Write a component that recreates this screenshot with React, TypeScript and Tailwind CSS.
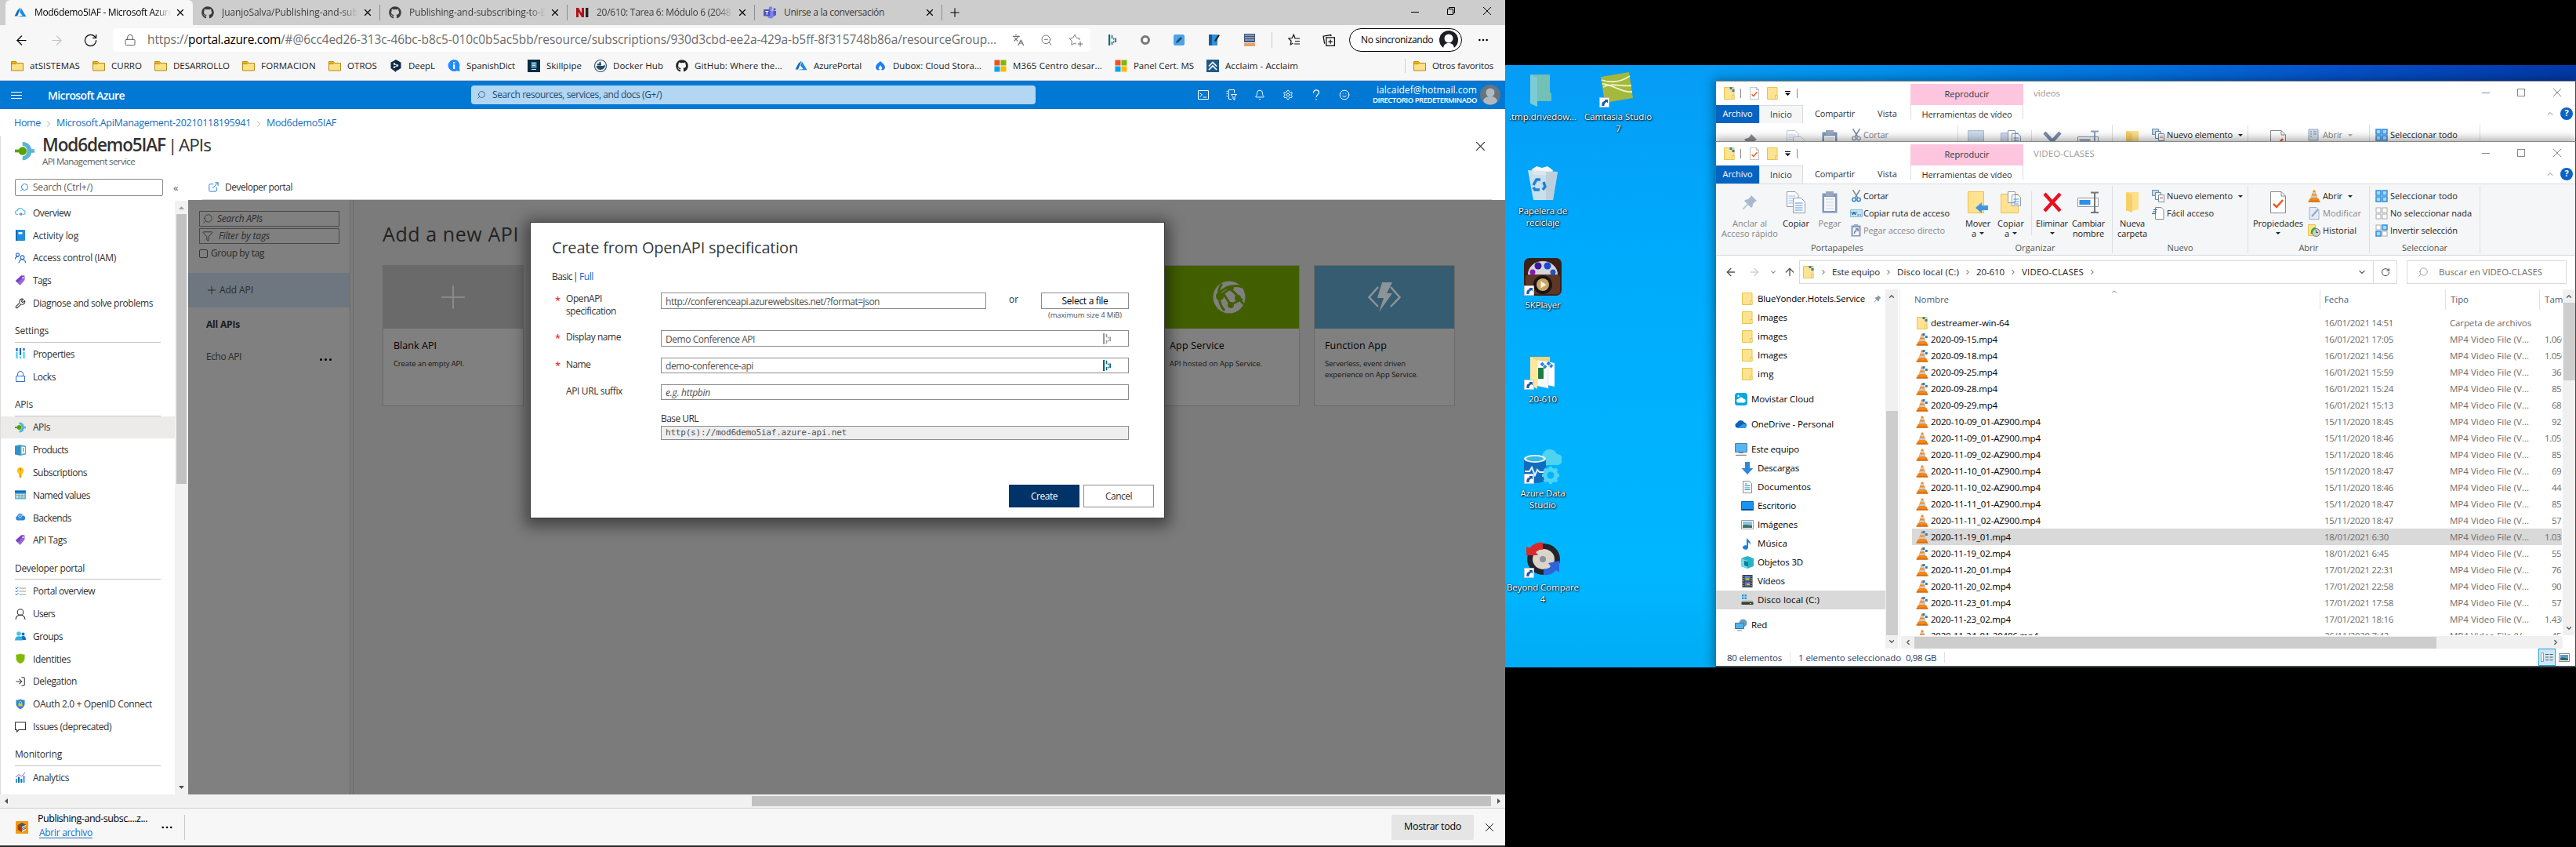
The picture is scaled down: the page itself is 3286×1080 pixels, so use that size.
import React, { useLayoutEffect, useRef } from "react";
import {
  ArrowLeft, ArrowRight, ArrowUp, RotateCw, Lock, Star, ZoomOut, Search, Filter, X, Plus, Bell, Settings, Smile,
  ExternalLink, ChevronRight, ChevronDown, ChevronUp, ChevronLeft, Wrench, LogIn, Languages, MoreHorizontal,
} from "lucide-react";
import { FaGithub } from "react-icons/fa";

type TP = { w: number; children: string; className?: string };

/* Text run whose tracking is adjusted so that it spans exactly w pixels. */
function T({ w, children, className = "" }: TP) {
  const ref = useRef<HTMLSpanElement>(null);
  useLayoutEffect(() => {
    const el = ref.current;
    if (!el) return;
    el.style.letterSpacing = "0px";
    const natural = el.getBoundingClientRect().width;
    el.style.letterSpacing = `${(w - natural) / children.length}px`;
  }, [w, children]);
  return (
    <span ref={ref} className={"inline-block shrink-0 whitespace-pre " + className}>
      {children}
    </span>
  );
}

/* ---------- shared icons ---------- */

const AzureLogo = () => (
  <svg viewBox="0 0 16 16" className="size-4 shrink-0">
    <path d="M8.5 1.5 4.6 4.8 0.5 12.6h3.6z" fill="#0b6bbd" />
    <path d="M9 2.6 7 7.6l3.7 4.5-7.2 1.2H15.5z" fill="#1a8ae6" />
  </svg>
);

const YFolder = () => (
  <svg viewBox="0 0 16 16" className="size-4 shrink-0">
    <path d="M0.5 2.5h6l1.5 2h7.5v9.5h-15z" fill="#ffe082" stroke="#b58a1b" />
    <path d="M0.5 5.5h6l1.3-1.2" fill="none" stroke="#b58a1b" />
    <path d="M1 3h5.3l1 1.3-.9.8H1z" fill="#f4b400" />
  </svg>
);

const MsLogo = () => (
  <svg viewBox="0 0 16 16" className="size-4 shrink-0">
    <path d="M.5.5h7v7h-7z" fill="#f25022" />
    <path d="M8.5.5h7v7h-7z" fill="#7fba00" />
    <path d="M.5 8.500h7v7h-7z" fill="#00a4ef" />
    <path d="M8.5 8.500h7v7h-7z" fill="#ffb900" />
  </svg>
);

const ApiIcon = ({ className = "size-3.5" }: { className?: string }) => (
  <svg viewBox="0 0 16 16" className={className + " shrink-0"}>
    <path d="M6.2 0.5A7.6 7.6 0 0 1 13.6 6.6H16v2.8h-2.4A7.6 7.6 0 0 1 6.2 15.5v-3a4.6 4.6 0 0 0 0-9z" fill="#59b4d9" />
    <circle cx="6.3" cy="8" r="3.3" fill="#57a300" />
    <path d="M0 6.8h4v2.4H0z" fill="#57a300" />
  </svg>
);

const Dash = ({ color }: { color: string }) => (
  <svg viewBox="0 0 12 14" className="h-3.5 w-3 shrink-0" fill={color}>
    <path d="M1 0h2.2v14H1zM4.800 0.800h1.500v4.400H4.800zM4.800 9h1.500v4.200H4.800zM7 4.500h1.400v2H7zM7 8.500h1.400v2H7zM9.300 4.500H11v5.500H9.300z" />
  </svg>
);

/* ---------- browser chrome ---------- */

const tabs = [
  { t: "Mod6demo5IAF - Microsoft Azure", w: 177, icon: <AzureLogo />, active: true, sep: false, fade: true },
  { t: "JuanjoSalva/Publishing-and-subsc", w: 185, icon: <FaGithub className="size-4 shrink-0" />, active: false, sep: true, fade: true },
  { t: "Publishing-and-subscribing-to-Ev", w: 180, icon: <FaGithub className="size-4 shrink-0" />, active: false, sep: true, fade: true },
  {
    t: "20/610: Tarea 6: Módulo 6 (20487", w: 178, active: false, sep: true, fade: true,
    icon: (
      <svg viewBox="0 0 16 16" className="size-4 shrink-0">
        <path d="M0 2h3l4 7V2h3v12H7L3 7v7H0z" fill="#b01218" />
        <path d="M12 2h3.4v12H12z" fill="#222" />
      </svg>
    ),
  },
  {
    t: "Unirse a la conversación", w: 128, active: false, sep: true, fade: false,
    icon: (
      <svg viewBox="0 0 16 16" className="size-4 shrink-0">
        <circle cx="9" cy="2.6" r="2.3" fill="#7b83eb" />
        <circle cx="14" cy="3.8" r="1.6" fill="#5059c9" />
        <path d="M5 5.5h8v6a4 4 0 0 1-8 0z" fill="#7b83eb" />
        <path d="M12.6 6H16v4a2.5 2.5 0 0 1-3.4 2.4z" fill="#5059c9" />
        <rect x="0" y="4" width="8.4" height="8.4" rx="1" fill="#4b53bc" />
        <path d="M2.3 6h4v1.1H4.9v3.6H3.7V7.1H2.3z" fill="#fff" />
      </svg>
    ),
  },
];

function TabBar() {
  return (
    <div className="flex h-8 shrink-0 bg-[#cdcdcd] pl-[7px] text-[12px] text-[#3b3b3b]">
      {tabs.map((tab) => (
        <div
          key={tab.t}
          className={
            "flex h-8 w-[239px] items-center pl-[11px] " + (tab.active ? "rounded-t-md bg-[#f7f7f7] text-black" : "text-[#3b3b3b]")
          }
        >
          {tab.icon}
          <div
            className={
              "ml-2.5 flex h-full w-[174px] items-center overflow-hidden " +
              (tab.fade ? "[mask-image:linear-gradient(to_right,black_88%,transparent)]" : "")
            }
          >
            <T w={tab.w}>{tab.t}</T>
          </div>
          <X className="ml-[5px] size-3.5 text-black" strokeWidth={2} />
          {tab.sep && <div className="ml-auto h-5 w-px bg-[#8c8c8c]" />}
        </div>
      ))}
      <div className="flex w-8 items-center justify-center">
        <Plus className="size-[18px] text-black" strokeWidth={1.4} />
      </div>
      <div className="ml-auto flex h-7 items-center text-black">
        <div className="flex w-[46px] justify-center"><div className="mt-0.5 h-px w-2.5 bg-black" /></div>
        <div className="flex w-[46px] justify-center">
          <svg viewBox="0 0 10 10" className="size-2.5" fill="none" stroke="#000"><path d="M.5 2.5h7v7h-7zM2.500 2.500v-2h7v7h-2" /></svg>
        </div>
        <div className="flex w-[46px] justify-center">
          <svg viewBox="0 0 10 10" className="size-2.5" stroke="#000"><path d="M0 0l10 10M10 0L0 10" /></svg>
        </div>
      </div>
    </div>
  );
}

function AddressBar() {
  return (
    <div className="flex h-[38px] shrink-0 items-center bg-[#f7f7f7] text-black">
      <div className="flex w-[144px] items-center pl-[18px]">
        <ArrowLeft className="size-[19px]" strokeWidth={1.5} />
        <ArrowRight className="ml-[26px] size-[19px] text-[#c4c4c4]" strokeWidth={1.5} />
        <RotateCw className="ml-[24px] size-[19px]" strokeWidth={1.5} />
      </div>
      <div className="flex h-[30px] w-[1247px] items-center rounded bg-white text-[15.500px] text-[#6b6b6b]">
        <Lock className="ml-[14px] size-4 text-[#444]" strokeWidth={1.3} />
        <div className="ml-[14px] flex">
          <T w={52}>https://</T>
          <T w={118} className="text-black">portal.azure.com</T>
          <T w={913}>/#@6cc4ed26-313c-46bc-b8c5-010c0b5ac5bb/resource/subscriptions/930d3cbd-ee2a-429a-b5ff-8f315748b86a/resourceGroup...</T>
        </div>
        <Languages className="ml-[20px] size-4" strokeWidth={1.7} />
        <ZoomOut className="ml-[20px] size-4" strokeWidth={1.4} />
        <div className="relative ml-[20px]">
          <Star className="size-4" strokeWidth={1.4} />
          <Plus className="absolute -right-1 -bottom-0.5 size-2.5 bg-white" strokeWidth={2.5} />
        </div>
      </div>
      <div className="ml-[22px] flex items-center gap-[30px]">
        <Dash color="#0e6a7a" />
        <div className="size-3 rounded-full border-[3px] border-[#777] bg-white" />
        <svg viewBox="0 0 14 14" className="size-3.5"><rect width="14" height="14" rx="2" fill="#4da3e8" /><path d="M3 11l1-3 5-5 2 2-5 5z" fill="#244a6b" /></svg>
        <svg viewBox="0 0 16 16" className="size-4"><path d="M1 1h11v14H1z" fill="#2f8fd8" /><path d="M1 1h4v14H1z" fill="#155a98" /><path d="M8 9l5-8 2 1-5 8z" fill="#222" /></svg>
        <svg viewBox="0 0 14 16" className="h-4 w-3.5"><path d="M0 0h14v11H0z" fill="#3d5578" /><path d="M1 2h12M1 5h12M1 8h12" stroke="#cfdcf0" /><path d="M0 12h14v4H0z" fill="#e9a06a" /></svg>
      </div>
      <div className="ml-[21px] h-5 w-px bg-[#c8c8c8]" />
      <svg viewBox="0 0 16 16" className="ml-5 size-4" fill="none" stroke="#111" strokeWidth="1.2">
        <path d="M9 5.500 7.200 1.200 5.200 5.500.8 6l3.300 3.200-.8 4.700 3.200-1.800M8.500 6H15M9 9.500h6M8 13h7" />
      </svg>
      <svg viewBox="0 0 16 16" className="ml-[28px] size-[17px]" fill="none" stroke="#111" strokeWidth="1.2">
        <path d="M4.500 4.500h10v10h-10zM9.500 7v5M7 9.500h5M2.500 12 1 3l9-1.500.4 1.500" />
      </svg>
      <div className="ml-[17px] flex h-[30px] w-[144px] items-center rounded-full border border-black bg-white pl-[14px] text-[12px]">
        <T w={92}>No sincronizando</T>
        <svg viewBox="0 0 24 24" className="ml-2 size-6">
          <circle cx="12" cy="12" r="12" fill="#1b1f23" />
          <circle cx="12" cy="10" r="5.500" fill="#fff" />
          <path d="M5 24c0-6 3-8 7-8s7 2 7 8z" fill="#fff" />
        </svg>
      </div>
      <MoreHorizontal className="ml-[19px] size-4" strokeWidth={1.8} />
    </div>
  );
}

const marks: { t: string; w: number; icon: React.ReactNode }[] = [
  { t: "atSISTEMAS", w: 64, icon: <YFolder /> },
  { t: "CURRO", w: 39, icon: <YFolder /> },
  { t: "DESARROLLO", w: 72, icon: <YFolder /> },
  { t: "FORMACION", w: 70, icon: <YFolder /> },
  { t: "OTROS", w: 38, icon: <YFolder /> },
  { t: "DeepL", w: 34, icon: <svg viewBox="0 0 16 16" className="size-4 shrink-0"><path d="M8 0l6.500 3.700v7.300L8 14.800V16l-2-1.500L1.500 11V3.700z" fill="#0f2b46" /><circle cx="6" cy="5.500" r="1.200" fill="#fff" /><circle cx="10" cy="7.500" r="1.200" fill="#fff" /><circle cx="6" cy="9.700" r="1.200" fill="#fff" /><path d="M6 5.500l4 2-4 2.200" fill="none" stroke="#fff" /></svg> },
  { t: "SpanishDict", w: 62, icon: <svg viewBox="0 0 16 16" className="size-4 shrink-0"><path d="M8 0a7.500 7.500 0 0 1 7 10l.5 5-4-.8A7.500 7.500 0 1 1 8 0z" fill="#1f8bff" /><path d="M7 3h2.200v2H7zM7 6.200h2.200V12H7z" fill="#fff" /></svg> },
  { t: "Skillpipe", w: 45, icon: <svg viewBox="0 0 16 16" className="size-4 shrink-0"><path d="M0 0h16v16H0z" fill="#0b2a40" /><path d="M4.500 3h7v8h-7z" fill="#4a90b8" /><path d="M6 5h4v1H6zM6 7h4v1H6zM5 12h6v1H5z" fill="#d7ebf5" /></svg> },
  { t: "Docker Hub", w: 64, icon: <svg viewBox="0 0 16 16" className="size-4 shrink-0"><circle cx="8" cy="8" r="7.500" fill="#fff" stroke="#3a5a74" strokeWidth="1.200" /><path d="M2.500 8h9l1.500-1.500L14 8c-1 4-4 5-6.500 5S3 11 2.500 8z" fill="#244b68" /><path d="M4 5h5v2.500H4zM6.500 2.800h2V5h-2z" fill="#244b68" /></svg> },
  { t: "GitHub: Where the...", w: 112, icon: <FaGithub className="size-4 shrink-0" /> },
  { t: "AzurePortal", w: 61, icon: <AzureLogo /> },
  { t: "Dubox: Cloud Stora...", w: 113, icon: <svg viewBox="0 0 16 16" className="size-4 shrink-0"><rect width="16" height="16" rx="3" fill="#fff" /><path d="M8 2c3 2.500 6 5 6 8a3.600 3.600 0 0 1-6 2.500A3.600 3.600 0 0 1 2 10c0-3 3-5.500 6-8z" fill="#1f7cff" /><path d="M8 7l2.500 4L8 14l-2.500-3z" fill="#fff" /></svg> },
  { t: "M365 Centro desar...", w: 114, icon: <MsLogo /> },
  { t: "Panel Cert. MS", w: 77, icon: <MsLogo /> },
  { t: "Acclaim - Acclaim", w: 93, icon: <svg viewBox="0 0 16 16" className="size-4 shrink-0"><path d="M0 0h16v16H0z" fill="#1f5a86" /><path d="M3 8.500 8 3.500l5 5M3 13l5-5 5 5" fill="none" stroke="#fff" strokeWidth="1.700" /></svg> },
];

function Bookmarks() {
  return (
    <div className="flex h-[33px] shrink-0 items-start border-b border-[#cfcfcf] bg-[#f7f7f7] pt-[5px] pl-[14px] text-[11.500px] text-[#222]">
      <div className="flex h-[18px] gap-4">
        {marks.map((m) => (
          <div key={m.t} className="flex items-center gap-2">
            {m.icon}
            <T w={m.w}>{m.t}</T>
          </div>
        ))}
      </div>
      <div className="mr-[15px] ml-auto flex h-[18px] items-center gap-2 border-l border-[#cfcfcf] pl-[10px]">
        <YFolder />
        <T w={78}>Otros favoritos</T>
      </div>
    </div>
  );
}

/* ---------- Azure portal ---------- */

function AzureBar() {
  return (
    <div className="flex h-9 shrink-0 items-center bg-[#0078d4] text-white">
      <div className="ml-[14px] flex w-3.5 flex-col gap-[3px]">
        <div className="h-px bg-white" /><div className="h-px bg-white" /><div className="h-px bg-white" />
      </div>
      <T w={98} className="ml-[33px] text-[14px] font-semibold">Microsoft Azure</T>
      <div className="ml-[442px] flex h-6 w-[720px] items-center rounded-sm bg-[#b3d6f2] pl-[7px] text-[12px] text-[#1b4b75]">
        <Search className="size-3 -scale-x-100" strokeWidth={1.5} />
        <T w={216} className="ml-2">Search resources, services, and docs (G+/)</T>
      </div>
      <div className="ml-[207px] flex w-[194px] items-center gap-[22px]">
        <svg viewBox="0 0 14 14" className="size-3.5" fill="none" stroke="#fff"><path d="M.5 1.500h13v11H.5zM2.500 4.500 5.500 7l-3 2.500M7 10h4" /></svg>
        <svg viewBox="0 0 14 14" className="size-3.5" fill="none" stroke="#fff"><path d="M7 12.500H3.500v-12h7v4M2 2.500H.5M2 5.500H.5M2 8.500H.5M6.500 6.500h7l-2.500 3v4l-2-1.500V9.500z" /></svg>
        <Bell className="size-3.5" strokeWidth={1.7} />
        <Settings className="size-3.5" strokeWidth={1.7} />
        <svg viewBox="0 0 14 14" className="size-3.5" fill="none" stroke="#fff" strokeWidth="1.200"><path d="M3.500 4.500C3.500 2 5 .8 7 .8s3.500 1.200 3.500 3.200C10.500 6.500 7 6.800 7 10M7 12v1.500" /></svg>
        <Smile className="size-3.5" strokeWidth={1.7} />
      </div>
      <div className="ml-[29px] flex w-[133px] flex-col items-end leading-[13px]">
        <T w={128} className="text-[12px]">ialcaidef@hotmail.com</T>
        <T w={133} className="text-[9.500px] font-semibold">DIRECTORIO PREDETERMINADO</T>
      </div>
      <svg viewBox="0 0 26 26" className="ml-1 size-[26px]">
        <circle cx="13" cy="13" r="13" fill="#69737c" />
        <circle cx="13" cy="10" r="5.500" fill="#b0bac2" />
        <path d="M4 21c1-5 5-6 9-6s8 1 9 6c-4 6-14 6-18 0z" fill="#b0bac2" />
      </svg>
    </div>
  );
}

const ic = "size-3.5 shrink-0";
const TagI = () => (
  <svg viewBox="0 0 14 14" className={ic}><path d="M8 .5h4.500V6L6.500 13 1 7z" fill="#9567d8" /><path d="M8 .5 1 7l2.500 2.800L12 .5z" fill="#7a3fd0" /><circle cx="10.300" cy="3" r="1" fill="#fff" /></svg>
);

type Item = { t: string; w: number; i: React.ReactNode };
const menu: { head?: string; hw?: number; items: Item[] }[] = [
  {
    items: [
      { t: "Overview", w: 48, i: <svg viewBox="0 0 14 14" className={ic} fill="none" stroke="#45c4e8" strokeWidth="1.200"><path d="M4 9.500H3A2.500 2.500 0 0 1 3 4.500 4 4 0 0 1 10.500 4 2.800 2.800 0 0 1 11 9.500h-1" /><path d="M5 9h4M7.500 7.500 9 9l-1.500 1.500" stroke="#8a5bd6" /></svg> },
      { t: "Activity log", w: 58, i: <svg viewBox="0 0 14 14" className={ic}><rect x="1" y="0" width="12" height="14" rx="1" fill="#1f8fe0" /><path d="M1 0h1.500v14H1z" fill="#0a5ea8" /><path d="M4.500 3h5v2.500h-5z" fill="#fff" /></svg> },
      { t: "Access control (IAM)", w: 106, i: <svg viewBox="0 0 14 14" className={ic} fill="none" stroke="#2b6fd1" strokeWidth="1.200"><circle cx="3.500" cy="2.800" r="2" /><circle cx="9.500" cy="6.300" r="2.400" /><path d="M.5 8.500c0-2.500 1.500-3.300 4-3.300M5 13.500c.5-3 2-4.500 4.500-4.500s4 1.500 4.500 4.500" /></svg> },
      { t: "Tags", w: 23, i: <TagI /> },
      { t: "Diagnose and solve problems", w: 153, i: <Wrench className={ic} strokeWidth={1.8} /> },
    ],
  },
  {
    head: "Settings", hw: 43,
    items: [
      { t: "Properties", w: 53, i: <svg viewBox="0 0 14 14" className={ic} strokeWidth="2.200"><path d="M2.500 0v4M7 0v9M11.500 0v3" stroke="#0f6cbd" /><path d="M2.500 5v8M7 10.500v2.500M11.500 4.500V13" stroke="#3fd0f0" /></svg> },
      { t: "Locks", w: 29, i: <svg viewBox="0 0 14 14" className={ic} fill="none" stroke="#2b6fd1"><path d="M1.500 6.500h11v7h-11zM3.500 6.500V4a3.500 3.500 0 0 1 7 0v2.500" /></svg> },
    ],
  },
  {
    head: "APIs", hw: 23,
    items: [
      { t: "APIs", w: 22, i: <ApiIcon /> },
      { t: "Products", w: 45, i: <svg viewBox="0 0 14 14" className={ic}><path d="M0 1.500 7 0v14L0 12.500z" fill="#2f93c7" /><path d="M7 0l7 1.500v11L7 14z" fill="#5aa9d0" /><path d="M8.500 2.500 13 3v8l-4.500.8z" fill="#fff" /><path d="M10 4h1.500v5H10z" fill="#7fba00" /></svg> },
      { t: "Subscriptions", w: 69, i: <svg viewBox="0 0 14 14" className={ic}><circle cx="7" cy="4.200" r="4.200" fill="#ffc20e" /><circle cx="7" cy="2.500" r="1" fill="#b36b00" /><path d="M5.500 8h3v4L7 14l-1.500-2z" fill="#f0a30a" /></svg> },
      { t: "Named values", w: 73, i: <svg viewBox="0 0 14 14" className={ic}><path d="M0 1.500h14v11H0z" fill="#5ab4e8" /><path d="M0 1.500h14v3H0z" fill="#0f6cbd" /><path d="M1.500 6h3v1.500h-3zM5.500 6h3v1.500h-3zM9.500 6h3v1.500h-3zM5.500 9h3v1.500h-3zM9.500 9h3v1.500h-3z" fill="#ffe27a" /><path d="M1.500 9h3v1.500h-3z" fill="#fff" /></svg> },
      { t: "Backends", w: 49, i: <svg viewBox="0 0 14 14" className={ic}><path d="M3 10.500A3 3 0 0 1 3 5a4.200 4.200 0 0 1 8-.6 3.200 3.200 0 0 1 0 6.100z" fill="#2b86dc" /><circle cx="6.500" cy="5.500" r="1.800" fill="none" stroke="#cfe8ff" /><circle cx="9.500" cy="4" r="1" fill="#cfe8ff" /></svg> },
      { t: "API Tags", w: 43, i: <TagI /> },
    ],
  },
  {
    head: "Developer portal", hw: 89,
    items: [
      { t: "Portal overview", w: 79, i: <svg viewBox="0 0 14 14" className={ic} fill="none"><path d="M5.500 3H14M5.500 7H14M5.500 11H14" stroke="#9a9a9a" /><path d="M.5 2.500 2 4l2.500-3M.5 6.500 2 8l2.500-3M.5 10.500 2 12l2.500-3" stroke="#2b86dc" /></svg> },
      { t: "Users", w: 28, i: <svg viewBox="0 0 14 14" className={ic} fill="none" stroke="#333" strokeWidth="1.100"><circle cx="7" cy="4.500" r="3.800" /><path d="M1 13.800c.5-3.500 2.500-5.500 6-5.500s5.500 2 6 5.500" /></svg> },
      { t: "Groups", w: 38, i: <svg viewBox="0 0 14 14" className={ic}><circle cx="10.500" cy="4.500" r="2" fill="#0f6cbd" /><path d="M7 12c0-3.500 1-5 3.500-5s3.500 1.500 3.500 5z" fill="#0f6cbd" /><circle cx="5" cy="4" r="2.800" fill="#45c4e8" /><path d="M0 12.500C0 9 2 7.300 5 7.300s5 1.700 5 5.200z" fill="#2fb1dc" /></svg> },
      { t: "Identities", w: 48, i: <svg viewBox="0 0 14 14" className={ic}><path d="M7 .5c2 1 3.500 1 5.500 1v5c0 3.500-3 5.500-5.500 6.800C4.500 12 1.500 10 1.500 6.500v-5C3.500 1.500 5 1.500 7 .5z" fill="#7fba00" /></svg> },
      { t: "Delegation", w: 56, i: <LogIn className={ic} strokeWidth={1.800} /> },
      { t: "OAuth 2.0 + OpenID Connect", w: 152, i: <svg viewBox="0 0 14 14" className={ic}><path d="M7 .5c2 1 3.500 1 5.500 1v5c0 3.500-3 5.500-5.500 6.800C4.500 12 1.500 10 1.500 6.500v-5C3.500 1.500 5 1.500 7 .5z" fill="#2b86dc" /><path d="M4.500 6h5v3.500h-5z" fill="#ffc20e" /><path d="M5.500 6V4.800a1.500 1.500 0 0 1 3 0V6" fill="none" stroke="#ffc20e" /></svg> },
      { t: "Issues (deprecated)", w: 100, i: <svg viewBox="0 0 14 14" className={ic} fill="none" stroke="#333" strokeWidth="1.100"><path d="M.5 1h13v9.500H5L2.500 13v-2.500h-2z" /></svg> },
    ],
  },
  {
    head: "Monitoring", hw: 60,
    items: [
      { t: "Analytics", w: 46, i: <svg viewBox="0 0 14 14" className={ic}><path d="M1 9h2v5H1zM10.500 5h2v9h-2z" fill="#2b9be0" /><path d="M4 6.500h2V14H4zM7.300 9h2v5h-2z" fill="#0f6cbd" /><path d="M1 7l4-3.500L8.500 6 13 1" fill="none" stroke="#8a5bd6" /></svg> },
    ],
  },
];

function Sidebar() {
  return (
    <div className="flex h-full w-60 shrink-0 flex-col border-l border-[#dcdcdc] bg-white text-[12px] text-[#323130]">
      <div className="mt-2 flex h-[22px] shrink-0 items-center pl-[18px]">
        <div className="flex h-[22px] w-[189px] items-center rounded-xs border border-[#8a8886] pl-[5px] text-[#605e5c]">
          <Search className="size-3 -scale-x-100 text-[#0078d4]" strokeWidth={1.700} />
          <T w={76} className="ml-[5px]">Search (Ctrl+/)</T>
        </div>
        <div className="ml-[13px] text-[13px] leading-none text-[#605e5c]">«</div>
      </div>
      <div className="mt-1.5 flex min-h-0 flex-1">
        <div className="flex w-[222px] flex-col overflow-hidden pt-px">
          {menu.map((g, gi) => (
            <React.Fragment key={gi}>
              {g.head && (
                <div className="mr-[18px] ml-[18px] flex h-[36px] shrink-0 items-center border-b border-[#c8c6c4] pt-[8px]">
                  <T w={g.hw || 0} className="text-[12px] font-medium">{g.head}</T>
                </div>
              )}
              {g.items.map((it) => (
                <div
                  key={it.t}
                  className={"flex h-[28.800px] shrink-0 items-center pl-[18px] " + (g.head === "APIs" && it.t === "APIs" ? "bg-[#edebe9]" : "")}
                >
                  {it.i}
                  <T w={it.w} className="ml-[9px] pt-px">{it.t}</T>
                </div>
              ))}
            </React.Fragment>
          ))}
        </div>
        <div className="flex w-[17px] flex-col items-center bg-[#f1f1f1]">
          <svg viewBox="0 0 7 4" className="mt-[7px] h-1 w-[7px]"><path d="M0 4l3.500-4L7 4z" fill="#a3a3a3" /></svg>
          <div className="mt-1.5 h-[344px] w-[13px] bg-[#c1c1c1]" />
          <svg viewBox="0 0 7 4" className="mt-auto mb-[7px] h-1 w-[7px]"><path d="M0 0l3.500 4L7 0z" fill="#505050" /></svg>
        </div>
      </div>
    </div>
  );
}

type CardData = { title: string; tw: number; head: string; lines: [string, number][]; icon?: React.ReactNode };

function Card({ title, tw, lines, head, icon }: CardData) {
  return (
    <div className="flex h-[180px] w-[180px] shrink-0 flex-col border border-[#696969] bg-[#808080] text-black">
      <div className={"flex h-20 shrink-0 items-center justify-center " + head}>{icon}</div>
      <div className="flex flex-col items-start pt-[13px] pl-[13px]">
        {title && <T w={tw} className="text-[12.500px] leading-[18px] font-medium">{title}</T>}
        <div className="h-[7px]" />
        {lines.map(([l, w]) => (
          <T key={l} w={w} className="text-[9.500px] leading-[14px] text-[#151515]">{l}</T>
        ))}
      </div>
    </div>
  );
}

const cards: CardData[] = [
  { title: "Blank API", tw: 55, head: "bg-[#6a6a6a]", lines: [["Create an empty API.", 90]], icon: <Plus className="size-12 text-[#8a8a8a]" strokeWidth={1} /> },
  { title: "", tw: 0, head: "bg-[#6a6a6a]", lines: [] },
  { title: "", tw: 0, head: "bg-[#6a6a6a]", lines: [] },
  { title: "", tw: 0, head: "bg-[#6a6a6a]", lines: [] },
  { title: "", tw: 0, head: "bg-[#6a6a6a]", lines: [] },
  {
    title: "App Service", tw: 70, head: "bg-[#425f00]", lines: [["API hosted on App Service.", 118]],
    icon: (
      <svg viewBox="0 0 42 42" className="size-[42px]">
        <circle cx="21" cy="21" r="20.500" fill="#808080" />
        <g stroke="#425f00" strokeWidth="3" fill="none">
          <path d="M5 19C14 8 24 4 38 8M17 8c10 4 16 12 22 22M8 24C6 14 8 8 12 4M14 17l9 14" />
          <path d="M12 17 22 10M22 31l16-8M8 22c1 7 3 12 7 16" />
        </g>
        <circle cx="9" cy="20" r="5" fill="#425f00" /><circle cx="32" cy="22" r="4" fill="#425f00" /><circle cx="23" cy="31" r="4" fill="#425f00" /><circle cx="24" cy="9" r="3" fill="#425f00" />
      </svg>
    ),
  },
  {
    title: "Function App", tw: 79, head: "bg-[#365c71]", lines: [["Serverless, event driven", 103], ["experience on App Service.", 119]],
    icon: (
      <svg viewBox="0 0 42 42" className="size-[42px]">
        <path d="M13 8 1.500 21 13 33M29 8l11.500 13L29 33" fill="none" stroke="#8d9498" strokeWidth="2.500" />
        <path d="M18 2h13l-7 14h7L14 40l6-18h-8z" fill="#8d9498" />
      </svg>
    ),
  },
];

const Req = ({ on = true }: { on?: boolean }) => <div className="w-3.5 shrink-0 pt-1 text-[13px] leading-none text-red-600">{on ? "*" : ""}</div>;

function Field({ v, w, kind }: { v: string; w: number; kind: "gray" | "teal" | "none" }) {
  return (
    <div className={"flex w-[597px] items-center border border-[#8c8c8c] bg-white pl-[5px] text-[#505050] " + (kind === "gray" ? "h-[21px]" : "h-5")}>
      <T w={w} className={kind === "none" ? "mt-0.5 italic" : "mt-0.5"}>{v}</T>
      {kind !== "none" && <div className="mr-[21px] ml-auto"><Dash color={kind === "gray" ? "#9b9b9b" : "#0f6577"} /></div>}
    </div>
  );
}

function Modal() {
  return (
    <div className="absolute top-7 left-[436px] flex h-[378px] w-[810px] flex-col border border-[#3c3c3c] bg-white text-[12px] text-[#323130] shadow-[0_4px_18px_6px_rgba(0,0,0,0.45)]">
      <T w={314} className="mt-[17px] ml-[27px] self-start text-[20px] leading-[30px] text-[#3a3a3a]">Create from OpenAPI specification</T>
      <div className="mt-[14px] ml-[27px] flex h-4 items-center">
        <T w={26}>Basic</T><T w={6} className="ml-px">|</T><T w={18} className="ml-0.5 text-[#0f6cd6]">Full</T>
      </div>
      <div className="mt-3 ml-[31px] flex h-12 items-start">
        <Req />
        <div className="flex w-[121px] flex-col items-start leading-4">
          <T w={46}>OpenAPI</T><T w={64}>specification</T>
        </div>
        <div className="flex h-[21px] w-[415px] items-center border border-[#8c8c8c] pl-[5px] text-[#505050]">
          <T w={273} className="mt-0.5">http://conferenceapi.azurewebsites.net/?format=json</T>
        </div>
        <T w={12} className="ml-[29px] leading-[18px]">or</T>
        <div className="ml-[29px] flex w-28 flex-col items-center">
          <div className="flex h-[21px] w-28 items-center justify-center border border-[#8c8c8c] text-[12px] text-black"><T w={59}>Select a file</T></div>
          <T w={94} className="text-[9.500px] leading-[16px] text-[#505050]">(maximum size 4 MiB)</T>
        </div>
      </div>
      <div className="ml-[31px] flex h-[35px] items-start">
        <Req /><div className="w-[121px] leading-[18px]"><T w={70}>Display name</T></div>
        <Field v="Demo Conference API" w={114} kind="gray" />
      </div>
      <div className="ml-[31px] flex h-[34px] items-start">
        <Req /><div className="w-[121px] leading-[18px]"><T w={31}>Name</T></div>
        <Field v="demo-conference-api" w={112} kind="teal" />
      </div>
      <div className="ml-[31px] flex h-9 items-start">
        <Req on={false} /><div className="w-[121px] leading-[18px]"><T w={72}>API URL suffix</T></div>
        <Field v="e.g. httpbin" w={57} kind="none" />
      </div>
      <T w={48} className="ml-[166px] self-start leading-4">Base URL</T>
      <div className="mt-px ml-[166px] flex h-[18px] w-[597px] items-center border border-[#8c8c8c] bg-[#eeeeee] pl-[5px] font-['DejaVu_Sans_Mono',monospace] text-[11px] text-[#505050]">
        <T w={231}>http(s)://mod6demo5iaf.azure-api.net</T>
      </div>
      <div className="mt-auto mr-[13px] mb-[13px] flex justify-end gap-[5px] text-[12px]">
        <div className="flex h-[29px] w-[90px] items-center justify-center bg-[#003367] text-white"><T w={34}>Create</T></div>
        <div className="flex h-[29px] w-[90px] items-center justify-center border border-[#8c8c8c]"><T w={34}>Cancel</T></div>
      </div>
    </div>
  );
}

function AzurePage() {
  return (
    <div className="flex h-[874px] shrink-0 flex-col bg-white">
      <div className="flex h-[34px] shrink-0 items-center pt-[3px] pl-[18px] text-[12.500px] text-[#106ebe]">
        <T w={34}>Home</T><ChevronRight className="mx-1 size-3 text-[#8a8886]" strokeWidth={1.500} />
        <T w={248}>Microsoft.ApiManagement-20210118195941</T><ChevronRight className="mx-1 size-3 text-[#8a8886]" strokeWidth={1.500} />
        <T w={89}>Mod6demo5IAF</T>
      </div>
      <div className="flex h-[47px] shrink-0 border-l border-[#dcdcdc] pl-[18px]">
        <ApiIcon className="mt-[7px] size-[25px]" />
        <div className="ml-[10px] flex flex-col items-start">
          <div className="flex h-6 items-center text-[22.500px] text-[#323130]">
            <T w={157} className="font-semibold">Mod6demo5IAF</T>
            <T w={12} className="ml-[3px]">|</T>
            <T w={41} className="ml-[2px]">APIs</T>
          </div>
          <T w={118} className="text-[11.500px] leading-[18px] text-[#605e5c]">API Management service</T>
        </div>
        <svg viewBox="0 0 11 11" className="mt-2 mr-[26px] ml-auto size-[11px]" stroke="#323130" strokeWidth="1.200"><path d="M0 0l11 11M11 0L0 11" /></svg>
      </div>
      <div className="flex min-h-0 flex-1">
        <Sidebar />
        <div className="flex min-w-0 flex-1 flex-col">
          <div className="mr-[17px] ml-[18px] flex h-[35px] shrink-0 items-center border-b border-[#d2d0ce] pt-[3px] pl-[7px] text-[12px] text-[#323130]">
            <ExternalLink className="size-[15px] text-[#1a7fd4]" strokeWidth={1.500} />
            <T w={86} className="ml-[7px]">Developer portal</T>
          </div>
          <div className="relative flex min-h-0 flex-1 overflow-hidden bg-[#7b7b7b]">
            <div className="flex w-[206px] shrink-0 flex-col bg-[#808080] text-[12px] text-[#2b2b2b]">
              <div className="mt-3.5 ml-3.5 flex h-5 w-[179px] shrink-0 items-center border border-[#484848] pl-[3px] italic">
                <Search className="size-3.5 -scale-x-100" strokeWidth={1.300} /><T w={58} className="ml-[5px]">Search APIs</T>
              </div>
              <div className="mt-0.5 ml-3.5 flex h-5 w-[179px] shrink-0 items-center border border-[#484848] pl-[3px] italic">
                <Filter className="size-3.5" strokeWidth={1.500} /><T w={65} className="ml-[7px]">Filter by tags</T>
              </div>
              <div className="mt-1 ml-3.5 flex h-4 items-center">
                <div className="size-[11px] rounded-[2px] border border-[#333]" /><T w={68} className="ml-1">Group by tag</T>
              </div>
              <div className="mt-[17px] flex h-11 shrink-0 items-center bg-[#6e7780] pl-[22px]">
                <Plus className="size-4" strokeWidth={1.500} /><T w={43} className="ml-0.5">Add API</T>
              </div>
              <T w={43} className="mt-3 ml-[23px] self-start leading-[20px] font-bold text-[#1c1c1c]">All APIs</T>
              <div className="mt-[21px] ml-[23px] flex h-5 items-center">
                <T w={45}>Echo API</T>
                <div className="mt-1.5 ml-[100px] flex gap-[3px]">
                  <i className="size-[3px] rounded-full bg-black" /><i className="size-[3px] rounded-full bg-black" /><i className="size-[3px] rounded-full bg-black" />
                </div>
              </div>
            </div>
            <div className="h-full w-[5px] shrink-0 border-x border-[#686868] bg-[#7d7d7d]" />
            <div className="flex flex-col pl-[37px]">
              <T w={174} className="mt-[26px] self-start text-[25px] leading-[34px] text-[#222]">Add a new API</T>
              <div className="mt-[23px] flex gap-[18px]">
                {cards.map((c, i) => <Card key={i} {...c} />)}
              </div>
            </div>
            <Modal />
          </div>
        </div>
      </div>
    </div>
  );
}

function Browser() {
  return (
    <div className="flex h-[1080px] w-[1920px] shrink-0 flex-col overflow-hidden bg-[#f7f7f7]">
      <TabBar />
      <AddressBar />
      <Bookmarks />
      <AzureBar />
      <AzurePage />
      <div className="flex h-[17px] shrink-0 items-center bg-[#f1f1f1]">
        <svg viewBox="0 0 4 7" className="ml-[6px] h-[7px] w-1"><path d="M4 0 0 3.500 4 7z" fill="#505050" /></svg>
        <div className="ml-[949px] h-[13px] w-[943px] bg-[#c1c1c1]" />
        <svg viewBox="0 0 4 7" className="ml-2 h-[7px] w-1"><path d="M0 0l4 3.500L0 7z" fill="#505050" /></svg>
      </div>
      <div className="flex h-[48px] shrink-0 items-center border-t border-[#d0d0d0] bg-[#f7f7f7] pl-5">
        <svg viewBox="0 0 16 16" className="size-4"><path d="M0 0h16v16H0z" fill="#f59a0c" /><path d="M2.500 5 8 2l5 2.500-5 3z" fill="#555" /><path d="M2.500 5 8 7.500V14l-5.500-3z" fill="#a33c1c" /><path d="M8 7.500 13 5v6l-5 3z" fill="#eee" /><path d="M8 9.500 13 7M8 11.500 13 9" stroke="#444" /></svg>
        <div className="mb-[3px] ml-3 flex flex-col items-start leading-[18px]">
          <T w={140} className="text-[12.500px] text-black">Publishing-and-subsc....z...</T>
          <T w={68} className="ml-0.5 text-[12px] text-[#1a6fc0] underline underline-offset-2">Abrir archivo</T>
        </div>
        <MoreHorizontal className="ml-4 size-[18px]" strokeWidth={1.500} />
        <div className="ml-[13px] h-8 w-px bg-[#c8c8c8]" />
        <div className="mr-[15px] ml-auto flex h-8 w-[105px] items-center justify-center rounded-xs bg-[#e5e5e5] text-[12.500px] text-black"><T w={73}>Mostrar todo</T></div>
        <svg viewBox="0 0 10 10" className="mr-[15px] size-2.5" stroke="#222"><path d="M0 0l10 10M10 0L0 10" /></svg>
      </div>
      <div className="h-0.5 shrink-0 bg-[#2c2a2b]" />
    </div>
  );
}

/* ---------- Explorer ---------- */

const Folder = ({ c = "size-4", sync = false }: { c?: string; sync?: boolean }) => (
  <svg viewBox="0 0 16 16" className={c + " shrink-0"}>
    <path d="M1.500.5h12.500v15H1.500z" fill="#ffe391" stroke="#e9c34e" />
    <path d="M11.500 10.500h2.500v5h-2.500z" fill="#fff0bd" stroke="#e9c34e" />
    {sync && <path d="M8.500 0h3v3h-3zM11.500 3h3v3h-3z" fill="#2f7fc4" />}
  </svg>
);

const Cone = ({ sync = false }: { sync?: boolean }) => (
  <svg viewBox="0 0 16 16" className="size-4 shrink-0">
    <path d="M2.500 11h11l2 4.500H.5z" fill="#f07e12" />
    <path d="M.5 14.500h15v1H.5z" fill="#c45a00" />
    <path d="M7 .5h2l4 11.500c-3 1.500-7 1.500-10 0z" fill="#f58a1f" />
    <path d="M6.300 3h3.400l.9 2.500H5.400zM4.700 7.500h6.600l.9 2.500H3.800z" fill="#c9ccd0" />
    {sync && <path d="M8.500 0h3v3h-3zM11.800 3h3v3h-3z" fill="#2f7fc4" />}
  </svg>
);

const Doc = ({ c = "h-7 w-5", check = false }: { c?: string; check?: boolean }) => (
  <svg viewBox="0 0 20 28" className={c + " shrink-0"}>
    <path d="M.5.5H14l5.500 5.500v21.500H.5z" fill="#fff" stroke="#8a8a8a" />
    <path d="M14 .5V6h5.500" fill="none" stroke="#8a8a8a" />
    {check && <path d="M4 16l4 4 8-9" fill="none" stroke="#f0571a" strokeWidth="2.500" />}
  </svg>
);

const Caret = ({ c = "text-[#222]" }: { c?: string }) => (
  <svg viewBox="0 0 6 3" className={"h-[3px] w-1.5 shrink-0 " + c}><path d="M0 0h6L3 3z" fill="currentColor" /></svg>
);

function Big({ w, icon, l1, w1, l2, w2, gray = false, caret = false }: { w: string; icon: React.ReactNode; l1: string; w1: number; l2?: string; w2?: number; gray?: boolean; caret?: boolean }) {
  return (
    <div className={"flex shrink-0 flex-col items-center pt-[5px] leading-[13px] " + w + (gray ? " text-[#868686]" : " text-[#222]")}>
      <div className="mb-1.5 flex h-7 items-center justify-center">{icon}</div>
      <T w={w1}>{l1}</T>
      <div className="flex h-[13px] items-center gap-1">
        {l2 && <T w={w2 || 0}>{l2}</T>}
        {caret && <Caret />}
      </div>
    </div>
  );
}

function Small({ icon, t, w, gray = false, caret = false, gap = "gap-[3px]" }: { icon: React.ReactNode; t: string; w: number; gray?: boolean; caret?: boolean; gap?: string }) {
  return (
    <div className={"flex h-[22px] items-center " + gap + (gray ? " text-[#868686]" : " text-[#222]")}>
      <div className="flex w-4 shrink-0 justify-center">{icon}</div>
      <T w={w}>{t}</T>
      {caret && <Caret c={gray ? "ml-1 text-[#aaa]" : "ml-1 text-[#222]"} />}
    </div>
  );
}

function Group({ w, label, lw, sep = true, children }: { w: string; label: string; lw: number; sep?: boolean; children: React.ReactNode }) {
  return (
    <div className={"flex h-[91px] shrink-0 " + w}>
      <div className="flex flex-1 flex-col pt-1">
        <div className="flex h-[68px] items-start">{children}</div>
        <div className="flex h-5 items-center justify-center text-[#555]"><T w={lw}>{label}</T></div>
      </div>
      {sep && <div className="mt-0.5 h-[86px] w-px bg-[#dcdfe3]" />}
    </div>
  );
}

const Sheets = ({ c = "h-7 w-6" }: { c?: string }) => (
  <svg viewBox="0 0 24 28" className={c} fill="#fff" stroke="#8e99a8">
    <path d="M.5.5H11l4 4v15H.5z" /><path d="M2.500 6h9M2.500 9h9M2.500 12h9M2.500 15h9" stroke="#8db8ea" />
    <path d="M8.500 8.500h10l5 5v14h-15z" /><path d="M10.500 15h10M10.500 18h10M10.500 21h10M10.500 24h10" stroke="#4a8fe0" />
  </svg>
);
const Grid4 = ({ on }: { on: [boolean, boolean, boolean, boolean] }) => (
  <svg viewBox="0 0 16 16" className="size-4">
    {on.map((b, i) => (
      <rect key={i} x={(i % 2) * 8 + 1} y={Math.floor(i / 2) * 8 + 1} width="6" height="6" fill={b ? "#a8d8fb" : "#fff"} stroke={b ? "#2f8fdc" : "#aaa"} strokeWidth={b ? 1.500 : 1} />
    ))}
  </svg>
);

function Ribbon({ dim = false }: { dim?: boolean }) {
  return (
    <div className={"flex h-[92px] shrink-0 border-[#d9dcdf] text-[11px] " + (dim ? "bg-white" : "border-y bg-[#f5f6f7]")}>
      <Group w="w-[309px]" label="Portapapeles" lw={67} sep={dim}>
        <div className="w-[3px]" />
        <Big w="w-20" gray l1="Anclar al" w1={44} l2="Acceso rápido" w2={72} icon={<svg viewBox="0 0 20 20" className="size-5"><path d="M12 1l7 7-2 1-3 3c0 3-1 4-2 5l-4-4-6 6H1v-1l6-6-4-4c1-1 3-2 5-2l3-3z" fill={dim ? "#8a8f96" : "#a9b9cc"} /></svg>} />
        <Big w="w-[38px]" gray={dim} l1="Copiar" w1={34} icon={<Sheets c={dim ? "h-7 w-6 opacity-50" : "h-7 w-6"} />} />
        <Big w="w-12" gray l1="Pegar" w1={29} icon={<svg viewBox="0 0 20 28" className="h-7 w-5"><rect x=".5" y="2.500" width="19" height="25" fill="#8497bb" /><path d="M3 7h14v18H3z" fill="#f4f7fb" /><path d="M5 0h10v6H5z" fill="#9aa8bf" /><path d="M5 10h10M5 14h10M5 18h10M5 22h10" stroke="#cdd8e8" /></svg>} />
        <div className="ml-0.5">
          <Small gap="gap-px" gray={dim} t="Cortar" w={32} icon={<svg viewBox="0 0 12 16" className="h-4 w-3" fill="none"><path d="M1.500 0l6 10M10.500 0l-6 10" stroke="#7f8a99" strokeWidth="1.500" /><circle cx="3" cy="12.500" r="2.200" stroke={dim ? "#9aa6b8" : "#2a86d1"} strokeWidth="1.500" /><circle cx="9" cy="12.500" r="2.200" stroke={dim ? "#9aa6b8" : "#2a86d1"} strokeWidth="1.500" /></svg>} />
          <Small gap="gap-px" t="Copiar ruta de acceso" w={110} icon={<svg viewBox="0 0 16 10" className="h-2.5 w-4"><path d="M.5.500h15v9H.5z" fill="#bfe3fa" stroke="#7fb8dd" /><path d="M2 3l1.500 4L5 3l1.500 4L8 3M9.500 7h1.500M12.500 7H14" fill="none" stroke="#234a70" /></svg>} />
          <Small gap="gap-px" gray t="Pegar acceso directo" w={104} icon={<svg viewBox="0 0 14 16" className="h-4 w-3.5"><path d="M.5 1.500h12v14H.5z" fill="#8497bb" /><path d="M2.500 4h8v10h-8z" fill="#f4f7fb" /><path d="M4 0h5v3H4z" fill="#9aa8bf" /><path d="M4.500 12c0-3 1-4 3-4M6 6h3v3" fill="none" stroke="#5e7396" strokeWidth="1.300" /></svg>} />
        </div>
      </Group>
      <Group w="w-[197px]" label="Organizar" lw={51}>
        <div className="w-1" />
        <Big w="w-[42px]" l1="Mover" w1={32} l2="a" w2={6} caret icon={<svg viewBox="0 0 26 28" className="h-7 w-[26px]"><path d="M.5.5h20v27H.5z" fill={dim ? "#cfdcee" : "#ffe391"} stroke={dim ? "#a9bbd6" : "#e9c34e"} /><path d="M10 21l8-7v4h8v6h-8v4z" fill="#3d98ea" /></svg>} />
        <Big w="w-[42px]" l1="Copiar" w1={34} l2="a" w2={6} caret icon={<svg viewBox="0 0 26 28" className="h-7 w-[26px]"><path d="M.5 3.500h22v24H.5z" fill={dim ? "#cfdcee" : "#ffe391"} stroke={dim ? "#a9bbd6" : "#e9c34e"} /><path d="M9.500.5h9v14h-9zM14.500 4.500H22l3.500 3v11h-11z" fill="#fff" stroke="#8e99a8" /><path d="M16.500 10h7M16.500 13h7M16.500 16h7" stroke="#4a8fe0" /></svg>} />
        <div className="mt-[5px] ml-[5px] h-14 w-px bg-[#dcdfe3]" />
        <Big w="w-[51px]" l1="Eliminar" w1={41} caret icon={<svg viewBox="0 0 24 26" className="h-[26px] w-6"><path d="M2 2l20 22M22 2 2 24" stroke={dim ? "#7d8fae" : "#e81123"} strokeWidth="4.500" /></svg>} />
        <Big w="w-[42px]" l1="Cambiar" w1={42} l2="nombre" w2={40} icon={<svg viewBox="0 0 28 28" className="size-7"><path d="M.5 8.500h26v11H.5z" fill="#fff" stroke="#8a97a8" /><path d="M2.500 11h14v6h-14z" fill={dim ? "#9fb4d2" : "#2f8fe8"} /><path d="M17 1.500h4l1 1.500 1-1.500h4M22 3v22M17 27h4l1-2 1 2h4" fill="none" stroke={dim ? "#8fa0bb" : "#777"} strokeWidth="2" /></svg>} />
      </Group>
      <Group w="w-[173px]" label="Nuevo" lw={33}>
        <Big w="w-[50px]" l1="Nueva" w1={32} l2="carpeta" w2={38} icon={<svg viewBox="0 0 18 28" className="h-7 w-[18px]"><path d="M1 1h16v22l-8 2H1z" fill="#ffdf87" /><path d="M1 1l8 3v23l-8-3z" fill="#f6cf68" /></svg>} />
        <div>
          <Small t="Nuevo elemento" w={84} caret icon={<svg viewBox="0 0 16 16" className="size-4" fill="#fff" stroke="#6f8aa5"><path d="M.5.500h8v7h-8z" fill="#bfe0f4" /><path d="M4.500 3.500h7v9h-7z" /><path d="M8.500 6.500h7v9h-7z" /><path d="M10 9.500h4M10 11.500h4" stroke="#e08a8a" /></svg>} />
          <Small t="Fácil acceso" w={60} icon={<svg viewBox="0 0 16 16" className="size-4" fill="none"><path d="M4.500.5h7.500l3 3v12H4.500z" fill="#fff" stroke="#8a8a8a" /><path d="M2 3.500h5M1 6h5M0 8.500h5" stroke="#2a5f98" strokeWidth="1.200" /></svg>} />
        </div>
      </Group>
      <Group w="w-[155px]" label="Abrir" lw={25}>
        <Big w="w-[76px]" l1="Propiedades" w1={64} caret icon={<Doc check />} />
        <div>
          <Small gray={dim} t="Abrir" w={25} caret icon={dim ? <svg viewBox="0 0 16 16" className="size-4"><path d="M1 1h12v14H1z" fill="#d6dfec" stroke="#93a4be" /><path d="M3 4h2M3 7h2M3 10h2M7 4h4M7 7h4" stroke="#6d83a8" /></svg> : <Cone />} />
          <Small gray t="Modificar" w={49} icon={<svg viewBox="0 0 14 16" className="h-4 w-3.5"><path d="M1 .5h9l3 3v12H1z" fill="#e4ebf5" stroke="#9fb0ca" /><path d="M4 12 12 3" stroke="#8ea3c6" strokeWidth="2" /></svg>} />
          <Small t="Historial" w={43} icon={<svg viewBox="0 0 16 16" className="size-4"><path d="M.5.5h9v14h-9z" fill="#ffe391" stroke="#e9c34e" /><circle cx="10.500" cy="10.500" r="5" fill="#ccd2cc" stroke="#777" /><path d="M5 12a5.500 5.500 0 0 1 5-7" fill="none" stroke="#38a838" strokeWidth="2.500" /><path d="M10.500 7.500v3h2.500" fill="none" stroke="#444" /></svg>} />
        </div>
      </Group>
      <Group w="w-[141px]" label="Seleccionar" lw={58}>
        <div className="ml-[7px]">
          <Small t="Seleccionar todo" w={86} icon={<Grid4 on={[true, true, true, true]} />} />
          <Small t="No seleccionar nada" w={104} icon={<Grid4 on={[false, false, false, false]} />} />
          <Small t="Invertir selección" w={86} icon={<Grid4 on={[false, true, true, false]} />} />
        </div>
      </Group>
    </div>
  );
}

function WindowHead({ title, tw }: { title: string; tw: number }) {
  return (
    <div className="flex h-[53px] shrink-0 bg-white text-[11px] text-[#333]">
      <div className="flex w-[248px] flex-col">
        <div className="flex h-[30px] items-center pl-[9px]">
          <Folder sync />
          <div className="ml-[6px] h-3 w-px bg-[#888]" />
          <Doc c="ml-[11px] h-4 w-3" check />
          <div className="ml-[9px]"><Folder /></div>
          <svg viewBox="0 0 7 6" className="ml-[8px] h-1.5 w-[7px]"><path d="M0 0h7v1H0zM0 2.500h7L3.500 6z" fill="#000" /></svg>
          <div className="ml-[8px] h-3 w-px bg-[#888]" />
        </div>
        <div className="flex h-[23px]">
          <div className="flex w-[55px] items-center justify-center bg-[#0563c1] text-white"><T w={38}>Archivo</T></div>
          <div className="flex w-[56px] items-center justify-center border border-b-0 border-[#dadbdc] bg-[#f5f6f7]"><T w={28}>Inicio</T></div>
          <div className="flex flex-1 items-center pl-[15px]"><T w={51}>Compartir</T><T w={25} className="ml-[29px]">Vista</T></div>
        </div>
      </div>
      <div className="mt-[3px] flex w-[144px] flex-col">
        <div className="flex h-[27px] items-center justify-center bg-[#fdc6de]"><T w={57}>Reproducir</T></div>
        <div className="flex h-[18px] items-center justify-center border-x border-[#dcdcdc] pt-1.5"><T w={115}>Herramientas de vídeo</T></div>
      </div>
      <div className="flex flex-1 pt-1.5 pl-[13px] text-[#9a9a9a]"><T w={tw} className="self-start text-[11.500px] leading-[18px]">{title}</T></div>
      <div className="flex w-[137px] flex-col">
        <div className="flex h-7 items-center">
          <div className="flex w-[45px] justify-center"><div className="h-px w-2.5 bg-[#888]" /></div>
          <div className="flex w-[46px] justify-center"><div className="size-2.5 border border-[#888]" /></div>
          <div className="flex w-[46px] justify-center"><svg viewBox="0 0 10 10" className="size-2.5" stroke="#888"><path d="M0 0l10 10M10 0L0 10" /></svg></div>
        </div>
        <div className="flex h-[25px] items-center justify-end pr-[3px]">
          <ChevronUp className="mr-[7px] size-3 text-[#888]" />
          <div className="flex size-4 items-center justify-center rounded-full bg-[#0b63c5] text-[11px] font-bold text-white">?</div>
        </div>
      </div>
    </div>
  );
}

type Nav = { t: string; w: number; i: React.ReactNode; lvl: 1 | 2; gap?: boolean; sel?: boolean; pin?: boolean };
const nav: Nav[] = [
  { t: "BlueYonder.Hotels.Service", w: 137, i: <Folder />, lvl: 2, pin: true },
  { t: "Images", w: 38, i: <Folder />, lvl: 2 },
  { t: "images", w: 38, i: <Folder />, lvl: 2 },
  { t: "Images", w: 38, i: <Folder />, lvl: 2 },
  { t: "img", w: 21, i: <Folder />, lvl: 2 },
  { t: "Movistar Cloud", w: 80, lvl: 1, gap: true, i: <svg viewBox="0 0 16 16" className="size-4"><rect width="16" height="16" rx="3.500" fill="#00a9e0" /><path d="M4.500 12.500a2.500 2.500 0 0 1 .3-5A3.500 3.500 0 0 1 11 7.500a2.500 2.500 0 0 1 .5 5z" fill="#fff" /><circle cx="4.500" cy="4" r="1.200" fill="#fff" /></svg> },
  { t: "OneDrive - Personal", w: 105, lvl: 1, gap: true, i: <svg viewBox="0 0 16 16" className="size-4"><path d="M3.500 12.500A3.300 3.300 0 0 1 3 6a5 5 0 0 1 9-.5 4 4 0 0 1 1.500 7z" fill="#0f62b8" /><path d="M3 13l8-5.500a3 3 0 0 1 2.500 5.300z" fill="#2a9be8" /></svg> },
  { t: "Este equipo", w: 61, lvl: 1, gap: true, i: <svg viewBox="0 0 16 16" className="size-4"><path d="M.5.500h15v11H.5z" fill="#56b6f2" stroke="#5c7c95" /><path d="M5 12.500h6M1 15.300h14" stroke="#7b8b99" strokeWidth="1.200" /></svg> },
  { t: "Descargas", w: 53, lvl: 2, i: <svg viewBox="0 0 16 16" className="size-4"><path d="M5 0h6v8h4.500L8 16 .5 8H5z" fill="#2e87dc" /></svg> },
  { t: "Documentos", w: 68, lvl: 2, i: <svg viewBox="0 0 16 16" className="size-4"><path d="M2.500.5h8l3 3v12h-11z" fill="#fff" stroke="#8a8a8a" /><path d="M4.500 6.500h7M4.500 9h7M4.500 11.500h7M5 4h3" stroke="#2a86b8" /></svg> },
  { t: "Escritorio", w: 49, lvl: 2, i: <svg viewBox="0 0 16 16" className="size-4"><path d="M.5 2.500h15v11H.5z" fill="#1b94f0" stroke="#0f65b5" /><path d="M1 12h14v1H1z" fill="#0b4b86" /></svg> },
  { t: "Imágenes", w: 51, lvl: 2, i: <svg viewBox="0 0 16 16" className="size-4"><path d="M.5 2.500h15v11H.5z" fill="#fff" stroke="#999" /><path d="M2 4h12v8H2z" fill="#8cc4ee" /><path d="M2 9c4-2 8 0 12 0v3H2z" fill="#3f6f66" /></svg> },
  { t: "Música", w: 38, lvl: 2, i: <svg viewBox="0 0 16 16" className="size-4"><path d="M7 .5c1 3 6 4 4.500 9-.5-2-1.500-2.500-2.500-3V13a3.500 2.800 0 1 1-2-2.500z" fill="#1b7fe0" /></svg> },
  { t: "Objetos 3D", w: 58, lvl: 2, i: <svg viewBox="0 0 16 16" className="size-4"><path d="M8 0l8 3v10l-8 3-8-3V3z" fill="#25b3c9" /><path d="M0 3l8 3v10l-8-3z" fill="#6fdbe8" /><path d="M4 6l5 1.500v6L4 12z" fill="#0e7d94" /></svg> },
  { t: "Vídeos", w: 35, lvl: 2, i: <svg viewBox="0 0 16 16" className="size-4"><path d="M1.500 0h13v16h-13z" fill="#333" /><path d="M4.500 1h7v6.500h-7z" fill="#4f86d8" /><path d="M4.500 8.500h7V15h-7z" fill="#4f6fb0" /><path d="M6 4.500h4v2H6zM7 11h4v2H7z" fill="#e8b91a" /><path d="M3 1v14M13 1v14" stroke="#ddd" strokeDasharray="1.500 1.500" /></svg> },
  { t: "Disco local (C:)", w: 79, lvl: 2, sel: true, i: <svg viewBox="0 0 16 16" className="size-4"><path d="M1 1h2.500v2.500H1zM4.500 1H7v2.500H4.500zM1 4.500h2.500V7H1zM4.500 4.500H7V7H4.500z" fill="#1aa0e8" /><path d="M2 8.500h12l1.500 2H.5z" fill="#bbb" /><path d="M.5 10.500h15v3.500H.5z" fill="#3b3b3b" /><path d="M11 12h2v1h-2z" fill="#5f5" /></svg> },
  { t: "Red", w: 20, lvl: 1, gap: true, i: <svg viewBox="0 0 16 16" className="size-4"><circle cx="10.500" cy="5.500" r="5" fill="#6d9dbd" /><path d="M.5 5.500h11v7H.5z" fill="#4fb4ee" stroke="#46708c" /><path d="M3 15h6" stroke="#7b8b99" /></svg> },
];

const files: [string, number, string, string, boolean][] = [
  ["2020-09-15.mp4", 85, "16/01/2021 17:05", "1.060", true],
  ["2020-09-18.mp4", 85, "16/01/2021 14:56", "1.050", true],
  ["2020-09-25.mp4", 85, "16/01/2021 15:59", "36", true],
  ["2020-09-28.mp4", 85, "16/01/2021 15:24", "85", true],
  ["2020-09-29.mp4", 85, "16/01/2021 15:13", "68", true],
  ["2020-10-09_01-AZ900.mp4", 140, "15/11/2020 18:45", "92", false],
  ["2020-11-09_01-AZ900.mp4", 140, "15/11/2020 18:46", "1.05", false],
  ["2020-11-09_02-AZ900.mp4", 140, "15/11/2020 18:46", "85", false],
  ["2020-11-10_01-AZ900.mp4", 140, "15/11/2020 18:47", "69", false],
  ["2020-11-10_02-AZ900.mp4", 140, "15/11/2020 18:46", "44", false],
  ["2020-11-11_01-AZ900.mp4", 140, "15/11/2020 18:47", "85", false],
  ["2020-11-11_02-AZ900.mp4", 140, "15/11/2020 18:47", "57", false],
  ["2020-11-19_01.mp4", 102, "18/01/2021 6:30", "1.03", true],
  ["2020-11-19_02.mp4", 102, "18/01/2021 6:45", "55", true],
  ["2020-11-20_01.mp4", 102, "17/01/2021 22:31", "76", true],
  ["2020-11-20_02.mp4", 102, "17/01/2021 22:58", "90", true],
  ["2020-11-23_01.mp4", 102, "17/01/2021 17:58", "57", true],
  ["2020-11-23_02.mp4", 102, "17/01/2021 18:16", "1.430", true],
  ["2020-11-24_01-20486.mp4", 137, "26/11/2020 7:42", "45", false],
];

const sizeWidth = (s: string) => (s.length === 5 ? 27 : s.length === 4 ? 21 : 12);

function Row({ icon, name, nw, date, type, yw, size, sel }: { icon: React.ReactNode; name: string; nw: number; date: string; type: string; yw: number; size: string; sel: boolean }) {
  return (
    <div className={"flex h-[21px] w-[829px] shrink-0 items-center overflow-hidden pl-[5px] " + (sel ? "bg-[#d9d9d9]" : "")}>
      {icon}
      <div className="ml-[3px] w-[502px] shrink-0 text-black"><T w={nw}>{name}</T></div>
      <div className="w-40 shrink-0"><T w={date.length === 16 ? 88 : 82}>{date}</T></div>
      <div className="w-[121px] shrink-0"><T w={yw}>{type}</T></div>
      {size && <div className={size.startsWith("1.") ? "shrink-0" : "shrink-0 pl-[9px]"}><T w={sizeWidth(size)}>{size}</T></div>}
    </div>
  );
}

const Crumb = () => <ChevronRight className="mx-1.5 size-2.5 text-[#666]" strokeWidth={2.500} />;

function Explorer() {
  return (
    <div className="absolute top-[97px] left-[268px] flex h-[671px] w-[1098px] flex-col border border-b-2 border-[#8a8a8a] border-r-[#2c4a7a] border-b-[#3f4a4f] border-l-[#1c7bb0] bg-white text-[11.500px] shadow-[0_0_12px_2px_rgba(0,0,0,0.4)]">
      <WindowHead title="VIDEO-CLASES" tw={78} />
      <Ribbon />
      <div className="mt-[6px] flex h-[30px] shrink-0 items-center pl-[11px]">
        <ArrowLeft className="size-4 text-[#555]" strokeWidth={2} />
        <ArrowRight className="ml-[14px] size-4 text-[#cfcfcf]" strokeWidth={2} />
        <ChevronDown className="ml-[11px] size-2.5 text-[#777]" strokeWidth={2.500} />
        <ArrowUp className="ml-[8px] size-4 text-[#555]" strokeWidth={2} />
        <div className="ml-[4px] flex h-[30px] w-[763px] items-center border border-[#d9d9d9] pl-[3px] text-[#222]">
          <Folder sync />
          <Crumb /><T w={61}>Este equipo</T><Crumb /><T w={79}>Disco local (C:)</T><Crumb /><T w={36}>20-610</T><Crumb /><T w={79}>VIDEO-CLASES</T><Crumb />
          <ChevronDown className="mr-2 ml-auto size-3 text-[#666]" strokeWidth={2.500} />
          <div className="flex h-full w-[30px] items-center justify-center border-l border-[#d9d9d9]"><RotateCw className="size-3 text-[#666]" strokeWidth={2.500} /></div>
        </div>
        <div className="ml-[12px] flex h-[30px] w-[204px] items-center border border-[#d9d9d9] pl-[13px] text-[#6d6d6d]">
          <Search className="size-3.5 -scale-x-100 text-[#888]" strokeWidth={1.300} /><T w={132} className="ml-[13px]">Buscar en VIDEO-CLASES</T>
        </div>
      </div>
      <div className="mt-[7px] flex min-h-0 flex-1">
        <div className="flex w-[216px] flex-col overflow-hidden text-black">
          {nav.map((n, i) => (
            <div
              key={i}
              className={"flex h-6 shrink-0 items-center gap-[5px] " + (n.gap ? "mt-2 " : "") + (n.sel ? "bg-[#d9d9d9] " : "") + (n.lvl === 1 ? "pl-6" : "pl-8")}
            >
              {n.i}
              <T w={n.w}>{n.t}</T>
              {n.pin && <svg viewBox="0 0 20 20" className="ml-[6px] size-2.5"><path d="M12 1l7 7-2 1-3 3c0 3-1 4-2 5l-4-4-6 6H1v-1l6-6-4-4c1-1 3-2 5-2l3-3z" fill="#8a9bb0" /></svg>}
            </div>
          ))}
        </div>
        <div className="flex h-full w-4 flex-col items-center bg-[#f0f0f0]">
          <ChevronUp className="mt-[4px] size-2.5 shrink-0 text-[#555]" strokeWidth={3} />
          <div className="mt-[141px] h-[286px] w-[15px] shrink-0 bg-[#cdcdcd]" />
          <ChevronDown className="mt-[3px] size-2.5 shrink-0 text-[#555]" strokeWidth={3} />
        </div>
        <div className="ml-0.5 w-px bg-[#ececec]" />
        <div className="flex flex-1 flex-col pl-px">
          <div className="flex h-[441px] shrink-0">
            <div className="flex w-[844px] flex-col overflow-hidden pl-[14px] text-[#6d6d6d]">
              <div className="relative flex h-[26px] w-[830px] shrink-0 items-center overflow-hidden text-[#4c607a]">
                <T w={44} className="ml-[3px]">Nombre</T>
                <ChevronUp className="absolute -top-0.5 left-[253px] size-2.5 text-[#666]" />
                <div className="ml-[473px] h-full w-px shrink-0 bg-[#e2e2e2]" /><T w={31} className="ml-[5px]">Fecha</T>
                <div className="ml-[123px] h-full w-px shrink-0 bg-[#e2e2e2]" /><T w={23} className="ml-[6px]">Tipo</T>
                <div className="ml-[90px] h-full w-px shrink-0 bg-[#e2e2e2]" /><T w={44} className="ml-[6px]">Tamaño</T>
              </div>
              <div className="h-1.5 shrink-0" />
              <Row icon={<Folder sync />} name="destreamer-win-64" nw={100} date="16/01/2021 14:51" type="Carpeta de archivos" yw={104} size="" sel={false} />
              {files.map((f) => (
                <Row key={f[0]} icon={<Cone sync={f[4]} />} name={f[0]} nw={f[1]} date={f[2]} type="MP4 Video File (V..." yw={101} size={f[3]} sel={f[0] === "2020-11-19_01.mp4"} />
              ))}
            </div>
            <div className="flex w-4 flex-col items-center bg-[#f0f0f0]">
              <ChevronUp className="mt-[4px] size-2.5 shrink-0 text-[#555]" strokeWidth={3} />
              <div className="mt-[3px] h-[99px] w-[15px] shrink-0 bg-[#cdcdcd]" />
              <ChevronDown className="mt-auto mb-[4px] size-2.5 shrink-0 text-[#555]" strokeWidth={3} />
            </div>
          </div>
          <div className="mt-px flex h-4 w-[844px] items-center bg-[#f0f0f0]">
            <ChevronLeft className="ml-[4px] size-2.5 text-[#555]" strokeWidth={3} />
            <div className="ml-[3px] h-[15px] w-[666px] bg-[#cdcdcd]" />
            <ChevronRight className="mr-[4px] ml-auto size-2.5 text-[#555]" strokeWidth={3} />
          </div>
        </div>
      </div>
      <div className="flex h-[22px] shrink-0 items-center pl-[14px] text-[#1e3a6b]">
        <T w={70} className="pt-0.5">80 elementos</T>
        <div className="ml-[10px] h-3.5 w-px bg-[#e2e2e2]" />
        <T w={131} className="ml-[10px] pt-0.5">1 elemento seleccionado</T><T w={39} className="ml-[6px] pt-0.5">0,98 GB</T>
        <div className="ml-[10px] h-3.5 w-px bg-[#e2e2e2]" />
        <div className="ml-auto flex h-[22px] w-[22px] items-center justify-center border border-[#26a0da] bg-[#cce8f6]">
          <svg viewBox="0 0 16 12" className="h-3 w-4"><path d="M.5.500h3v11h-3z" fill="#fff" stroke="#999" /><path d="M6 2.500h4M11.500 2.500h4M6 6h4M11.500 6h4M6 9.500h4M11.500 9.500h4" stroke="#555" /></svg>
        </div>
        <svg viewBox="0 0 14 11" className="mr-[7px] ml-[4px] h-[11px] w-3.5"><path d="M.5.500h13v10H.5z" fill="#fff" stroke="#888" /><path d="M2 2h10v7H2z" fill="#5b9bd5" /><path d="M2 6c4-2 7 1 10 1v2H2z" fill="#2f6b52" /></svg>
      </div>
    </div>
  );
}

const Shortcut = () => (
  <svg viewBox="0 0 13 13" className="absolute bottom-0 left-0 size-[13px]"><path d="M.5.500h12v12H.5z" fill="#fff" stroke="#b8c4d0" /><path d="M3.500 11c-.5-4 1-6 3.500-6V3h4v4.500L9.500 6C7 7 6.500 9 6.500 11z" fill="#1f5ba8" /></svg>
);

function DeskIcon({ pos, lines, icon, sc = true }: { pos: string; lines: [string, number][]; icon: React.ReactNode; sc?: boolean }) {
  return (
    <div className={"absolute flex w-24 flex-col items-center text-[11.500px] leading-[15px] text-white [text-shadow:1px_1px_2px_#000,0_0_2px_rgba(0,0,0,0.9)] " + pos}>
      <div className="relative mb-[4px] size-12">{icon}{sc && <Shortcut />}</div>
      {lines.map(([l, w]) => <T key={l} w={w}>{l}</T>)}
    </div>
  );
}

function Desktop() {
  return (
    <div className="relative h-[768px] w-[1366px] shrink-0 overflow-hidden bg-[linear-gradient(to_bottom,#069cf5_0%,#00a8fb_25%,#00b2ff_60%,#00b6ff_85%,#00acf5_100%)]">
      <div className="h-[26px] bg-[linear-gradient(to_right,transparent_18%,#0090ee_35%,#0070dc_60%,#0550c8_78%,#0238a6_100%)]" />
      <DeskIcon pos="top-[6px] left-0" sc={false} lines={[[".tmp.drivedow...", 86]]} icon={<svg viewBox="0 0 48 48" className="size-12 opacity-80"><path d="M8 6h25v22l2 3v9H10L8 38z" fill="#8fc9a8" /><path d="M8 6l9 4v37l-9-4z" fill="#9ad8cf" /></svg>} />
      <DeskIcon pos="top-[6px] left-[96px]" lines={[["Camtasia Studio", 86], ["7", 6]]} icon={<svg viewBox="0 0 48 48" className="size-12"><path d="M2 9 38 3l5 33-36 6z" fill="#a3b83c" /><path d="M3 13c12 4 24 3 36-5M5 22c10-6 26 0 36-2M4 18c12 0 26 12 38 10" fill="none" stroke="#eef3c4" strokeWidth="1.800" /></svg>} />
      <DeskIcon pos="top-[126px] left-0" sc={false} lines={[["Papelera de", 62], ["reciclaje", 43]]} icon={<svg viewBox="0 0 48 48" className="size-12"><path d="M10 7l6-4 7 2 7-2 7 5-2 6H12z" fill="#f4f6f8" /><path d="M5 8l38 2-6 36H12z" fill="#d9e4ec" opacity=".92" /><path d="M28 10h15l-6 36h-9z" fill="#b9c8d4" opacity=".7" /><g fill="none" stroke="#1f7fd6" strokeWidth="3.500"><path d="M12 27l4-7h5M25 23l2 6-3 4M20 33h-6l-2-3" /></g></svg>} />
      <DeskIcon pos="top-[246px] left-0" lines={[["5KPlayer", 45]]} icon={<svg viewBox="0 0 48 48" className="size-12"><rect width="48" height="48" rx="7" fill="#3a2019" /><rect x="2" y="21" width="44" height="25" rx="4" fill="#5e3626" /><path d="M5 21a19 17 0 0 1 38 0z" fill="#d5d5dc" /><circle cx="18" cy="10" r="4.500" fill="#3a1a9c" /><circle cx="30" cy="10" r="4.500" fill="#1c49d8" /><circle cx="11" cy="18" r="3.500" fill="#8a18b8" /><circle cx="37" cy="18" r="3.500" fill="#2450c8" /><circle cx="24" cy="34" r="12" fill="#1b1512" /><circle cx="24" cy="34" r="8" fill="#c7a565" /><path d="M21.500 29.500l7 4.500-7 4.500z" fill="#fff6d8" /></svg>} />
      <DeskIcon pos="top-[366px] left-0" lines={[["20-610", 36]]} icon={<svg viewBox="0 0 48 48" className="size-12"><path d="M8 6h25v36H8z" fill="#f6d67a" /><path d="M26 11l13 3v30l-13-3z" fill="#fff" /><path d="M17 10l14 2v34l-14-3z" fill="#f7fafc" stroke="#ccc" strokeWidth=".5" /><path d="M18 20h7v14h-7z" fill="#1e7a43" /><path d="M22 14l6 6M30 13l6 6" stroke="#2f86cf" strokeWidth="4" strokeDasharray="4 1" /><path d="M8 6l9 5v36l-9-5z" fill="#ffe69c" /></svg>} />
      <DeskIcon pos="top-[486px] left-0" lines={[["Azure Data", 57], ["Studio", 34]]} icon={<svg viewBox="0 0 48 48" className="size-12"><path d="M21 24a6 6 0 0 1 2-12 10 10 0 0 1 19-2 7 7 0 0 1 1 14z" fill="#4fd3f0" /><path d="M0 16v26a14 5 0 0 0 28 0V16z" fill="#0f6cbf" /><ellipse cx="14" cy="16" rx="14" ry="5" fill="#e8f4fb" /><ellipse cx="14" cy="16" rx="11" ry="3.300" fill="#38b9e8" /><path d="M1 32h6l3-5 4 10 3-7 3 3h7" fill="none" stroke="#dff2ff" strokeWidth="2" /><circle cx="34" cy="37" r="7" fill="none" stroke="#4fd3f0" strokeWidth="5" /><path d="M34 26v4M34 44v4M23 37h4M41 37h4M26 29l3 3M39 42l3 3M42 29l-3 3M29 42l-3 3" stroke="#4fd3f0" strokeWidth="4" /></svg>} />
      <DeskIcon pos="top-[606px] left-0" lines={[["Beyond Compare", 92], ["4", 7]]} icon={<svg viewBox="0 0 48 48" className="size-12"><ellipse cx="25" cy="24" rx="21" ry="20" fill="#23252a" /><ellipse cx="25" cy="24" rx="14" ry="13" fill="#d9d5cc" /><ellipse cx="24" cy="24" rx="4" ry="4" fill="#8d9096" /><path d="M3 8l4 2c5-6 12-8 17-7v9c-4-1-7 0-9 3l3 4H3z" fill="#dc2a2a" /><path d="M45 41l-4-3c-4 5-10 7-16 6v-8c4 1 7 0 9-3l-3-4 14-3z" fill="#3163d8" /></svg>} />
      <div className="absolute top-[20px] left-[268px] flex h-[78px] w-[1098px] flex-col overflow-hidden border border-[#8a8a8a] border-r-[#2c4a7a] border-l-[#1c7bb0] bg-white shadow-[0_0_12px_2px_rgba(0,0,0,0.35)]">
        <WindowHead title="videos" tw={34} />
        <Ribbon dim />
      </div>
      <Explorer />
    </div>
  );
}

export default function App() {
  return (
    <div className="flex h-[1080px] w-[3286px] overflow-hidden bg-black font-['Open_Sans','Noto_Sans',sans-serif]">
      <Browser />
      <div className="flex flex-col pt-[83px]">
        <Desktop />
      </div>
    </div>
  );
}
